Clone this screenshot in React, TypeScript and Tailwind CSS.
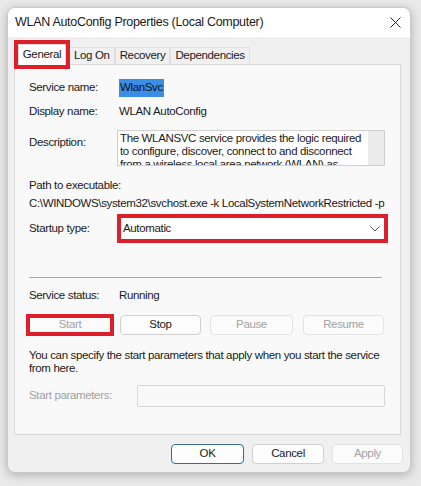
import React from 'react';

const font = { fontFamily: '"Liberation Sans", Arial, sans-serif' };

function Tab({ label, active }: { label: string; active?: boolean }) {
  if (active) {
    return (
      <div className="relative z-10 -mb-px ml-[4px] flex h-[21px] w-[48px] items-center justify-center border-x border-t border-[#d9d9d9] bg-white outline-4 outline-[#dc1f2b]">
        General
      </div>
    );
  }
  return (
    <div className="flex h-[17px] items-center border-x border-t border-[#e0e0e0] bg-[#f0f0f0] px-[4px]">
      {label}
    </div>
  );
}

function Btn({ children, disabled, className = '' }: { children: React.ReactNode; disabled?: boolean; className?: string }) {
  return (
    <div
      className={
        'flex h-[20px] items-center justify-center rounded-[4px] border ' +
        (disabled ? 'border-[#e3e3e3] bg-[#fbfbfb] text-[#a3a3a3] ' : 'border-[#d0d0d0] bg-[#fdfdfd] text-[#1b1b1b] ') +
        className
      }
    >
      {children}
    </div>
  );
}

export default function App() {
  return (
    <div style={font} className="h-[486px] w-[421px] overflow-hidden bg-[#e9e9e9] pl-[7px] pt-[7px] text-[11.5px] tracking-[-0.35px] text-[#1a1a1a]">
      <div className="flex h-[466px] w-[404px] flex-col overflow-hidden rounded-[8px] border border-[#c9c9c9] bg-[#f0f0f0] shadow-[0_2px_10px_rgba(0,0,0,0.25)]">
        {/* title bar */}
        <div className="flex h-[29px] shrink-0 items-center justify-between bg-white pl-[7px] pr-[9px]">
          <span className="text-[12.5px] tracking-[-0.3px]">WLAN AutoConfig Properties (Local Computer)</span>
          <svg width="11" height="11" viewBox="0 0 11 11" stroke="#222" strokeWidth="1">
            <path d="M0.5 0.5 L10.5 10.5 M10.5 0.5 L0.5 10.5" />
          </svg>
        </div>

        {/* tabs */}
        <div className="ml-[6px] mt-[7px] flex items-end">
          <Tab label="General" active />
          <div className="ml-[3px] flex items-end">
            <Tab label="Log On" />
            <Tab label="Recovery" />
            <Tab label="Dependencies" />
          </div>
        </div>

        {/* page */}
        <div className="ml-[6px] mr-[9px] flex h-[371px] shrink-0 flex-col border border-[#dadada] bg-[#f9f9f9] pl-[14px]">
          <div className="mt-[15px] flex h-[16px] items-center">
            <span className="w-[90px]">Service name:</span>
            <span className="bg-[#3a8ee6] px-px text-[#111]">WlanSvc</span>
          </div>
          <div className="mt-[8px] flex h-[16px] items-center">
            <span className="w-[90px]">Display name:</span>
            <span>WLAN AutoConfig</span>
          </div>
          <div className="mt-[10px] flex h-[36px]">
            <span className="w-[88px] pt-[4px]">Description:</span>
            <div className="flex w-[268px] border border-[#cfcfcf] bg-white">
              <div className="flex-1 overflow-hidden whitespace-nowrap pl-[2px] pt-[1px] leading-[13px]">
                The WLANSVC service provides the logic required
                <br />
                to configure, discover, connect to and disconnect
                <br />
                from a wireless local area network (WLAN) as
              </div>
              <div className="w-[16px] bg-[#ececec]" />
            </div>
          </div>
          <div className="mt-[12px] flex h-[16px] items-center">Path to executable:</div>
          <div className="mt-[2px] flex h-[16px] items-center whitespace-nowrap">
            C:\WINDOWS\system32\svchost.exe -k LocalSystemNetworkRestricted -p
          </div>
          <div className="mt-[6px] flex h-[21px] items-center">
            <span className="w-[92px]">Startup type:</span>
            <div className="flex h-[21px] w-[263px] items-center justify-between bg-white pl-[2px] pr-[4px] outline-4 outline-[#dc1f2b]">
              <span>Automatic</span>
              <svg width="10" height="6" viewBox="0 0 10 6" fill="none" stroke="#555" strokeWidth="1">
                <path d="M0.5 0.5 L5 5 L9.5 0.5" />
              </svg>
            </div>
          </div>
          <div className="mt-[38px] h-px w-[353px] bg-[#a8a8a8]" />
          <div className="mt-[10px] flex h-[16px] items-center">
            <span className="w-[90px]">Service status:</span>
            <span>Running</span>
          </div>
          <div className="mt-[10px] flex items-center">
            <div className="-ml-[3px] flex h-[22px] w-[88px] items-center justify-center border-[4px] border-[#dc1f2b] bg-[#fbfbfb] text-[#a3a3a3]">
              Start
            </div>
            <Btn className="ml-[6px] w-[81px]">Stop</Btn>
            <Btn disabled className="ml-[9px] w-[83px]">Pause</Btn>
            <Btn disabled className="ml-[10px] w-[81px]">Resume</Btn>
          </div>
          <div className="mt-[13px] leading-[13px]">
            You can specify the start parameters that apply when you start the service
            <br />
            from here.
          </div>
          <div className="mt-[10px] flex h-[22px] items-center">
            <span className="w-[108px] text-[#a0a0a0]">Start parameters:</span>
            <div className="h-[22px] w-[248px] rounded-[2px] border border-[#d6d6d6] bg-[#f9f9f9]" />
          </div>
        </div>

        {/* footer */}
        <div className="mr-[7px] mt-[9px] flex justify-end gap-[8px]">
          <div className="flex h-[20px] w-[73px] items-center justify-center rounded-[4px] border border-[#3d6a86] bg-[#fdfdfd]">OK</div>
          <Btn className="w-[72px]">Cancel</Btn>
          <Btn disabled className="w-[71px]">Apply</Btn>
        </div>
      </div>
    </div>
  );
}
